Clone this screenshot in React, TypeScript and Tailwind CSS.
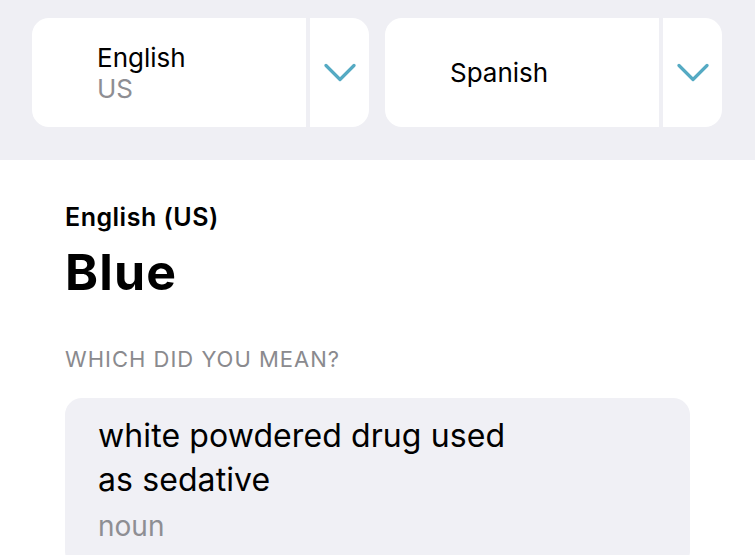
import React from "react";

const Chevron = () => (
  <svg width="32" height="19" viewBox="0 0 32 19" fill="none">
    <polyline
      points="2,2.5 16,16.5 30,2.5"
      stroke="#55aac3"
      strokeWidth="3.2"
      strokeLinecap="round"
      strokeLinejoin="round"
    />
  </svg>
);

function LangCard({ title, sub }: { title: string; sub?: string }) {
  return (
    <div className="flex h-[109px] flex-1 overflow-hidden rounded-[17px] bg-white">
      <div className="flex flex-1 flex-col justify-center pl-[65px]">
        <div className="text-[26px] leading-[31px] text-black">{title}</div>
        {sub && <div className="text-[26px] leading-[31px] text-[#8e8e93]">{sub}</div>}
      </div>
      <div className="w-[4px] bg-[#efeff4]" />
      <div className="flex w-[59px] items-center justify-center">
        <Chevron />
      </div>
    </div>
  );
}

export default function App() {
  return (
    <div
      className="h-[555px] w-[755px] overflow-hidden bg-white"
      style={{ fontFamily: "Inter, 'Noto Sans', sans-serif" }}
    >
      <div className="flex h-[160px] gap-[16px] bg-[#efeff4] pl-[32px] pr-[33px] pt-[18px]">
        <LangCard title="English" sub="US" />
        <LangCard title="Spanish" />
      </div>
      <div className="pl-[65px] pr-[65px] pt-[40px]">
        <div className="text-[25px] font-semibold leading-[35px] tracking-[0.5px] text-black">English (US)</div>
        <div className="mt-[9px] text-[50px] font-bold leading-[56px] tracking-[1.2px] text-black">Blue</div>
        <div className="mt-[45px] text-[22px] leading-[28px] tracking-[1px] text-[#8a8a8e]">WHICH DID YOU MEAN?</div>
        <div className="mt-[25px] rounded-[17px] bg-[#f0f0f5] pl-[33px] pr-[20px] pt-[16px] pb-[20px]">
          <div className="text-[32px] leading-[44px] tracking-[0.1px] text-black">
            white powdered drug used
            <br />
            as sedative
          </div>
          <div className="mt-[2px] text-[28px] leading-[44px] text-[#8e8e93]">noun</div>
        </div>
      </div>
    </div>
  );
}
